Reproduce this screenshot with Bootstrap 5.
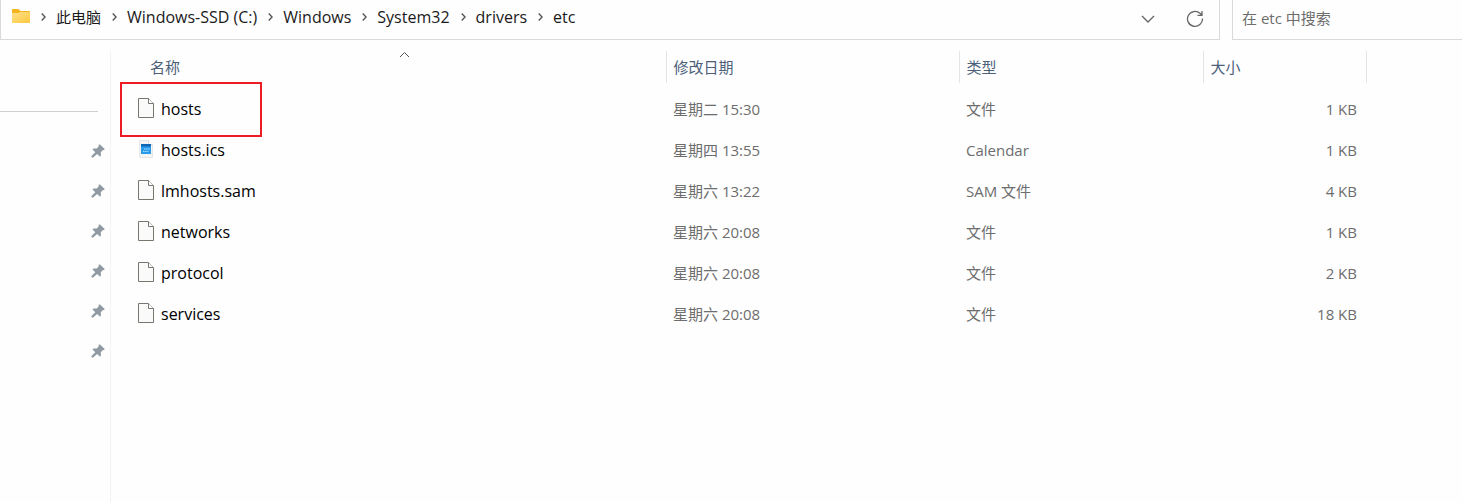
<!DOCTYPE html>
<html lang="zh-CN">
<head>
<meta charset="utf-8">
<meta name="viewport" content="width=device-width, initial-scale=1">
<title>etc</title>
<link href="https://cdn.jsdelivr.net/npm/bootstrap@5.3.0/dist/css/bootstrap.min.css" rel="stylesheet">
<style>
  body { font: 15px/20px "Open Sans", "Noto Sans CJK SC", sans-serif; background: #fefefe; color: #000; }
  .topbar { height: 40px; gap: 12px; }
  .address { border: solid #d9d9d9; border-width: 0 1px 1px; padding: 0 15px 4px 11px; }
  .crumbs { gap: 11px; padding-bottom: 2px; }
  .crumbs li { gap: 10px; }
  .crumbs a { color: #1a1a1a; font-size: 16px; }
  .crumbs a:lang(zh) { font-size: 15px; }
  .tools { gap: 29px; }
  .address button { color: #666; width: 18px; height: 18px; margin-top: 2px; }
  .search { width: 230px; border: solid #d9d9d9; border-width: 0 0 1px 1px; padding: 0 9px 4px; }
  .search input { outline: 0; color: #6d6d6d; }
  .search input::placeholder { color: #6d6d6d; opacity: 1; }
  .panes { margin-top: 11px; }
  .side { width: 111px; border-right: 1px solid #f3f3f3; }
  .side hr { margin: 60px 12px 19px 0; border-color: #cfcfcf; opacity: 1; }
  .pins li { height: 40px; padding-right: 5px; }
  .files { table-layout: fixed; }
  .files th { height: 32px; padding: 0 7px; font-weight: 400; color: #4c607a; border-right: 1px solid #e5e5e5; position: relative; }
  .files th:last-child { border: 0; }
  .files th:first-child { padding-left: 39px; }
  .files td { height: 41px; padding: 0 8px 0 7px; color: #6d6d6d; }
  .files td:first-child { padding-left: 27px; color: #000; font-size: 16px; position: relative; }
  .files .gap-row td { height: 5px; }
  .files td.size { padding-right: 9px; }
  .w-name { width: 555px; } .w-date { width: 293px; } .w-type { width: 244px; } .w-size { width: 163px; }
  .sort-mark { left: 288px; top: 0; }
  .marker { left: 9px; top: -6px; width: 142px; height: 55px; border: 2px solid #ed1c24; }
  .entry { gap: 7px; }
</style>
</head>
<body class="min-vh-100 d-flex flex-column overflow-hidden">
<svg class="d-none">
  <symbol id="page" viewBox="0 0 16 21"><path d="M.5.5h10l5 5v14H.5z" fill="#fafafa" stroke="#77776f"/><path d="M10.500.5v5h5" fill="#fff" stroke="#77776f"/></symbol>
  <symbol id="calendar" viewBox="0 0 16 21"><path d="M1.500 1.500h9l4 4v13h-13z" fill="#f5f5f5" stroke="#e6e6e6"/><path d="M10.500 1.500v4h4" fill="#fff" stroke="#dcdcdc"/><path d="M3 5h10v10H3z" fill="#2a9bea"/><path d="M3 5h10v2.500H3z" fill="#0f66b5"/><path d="M6 10h6M5 12.500h5.500" stroke="#a9dfff" stroke-dasharray="1.500 .6"/></symbol>
  <symbol id="pin" viewBox="0 0 14 14"><path d="M9 .6 13.400 4.700c.4.500 0 1.300-.6 1.300l-1.500.4-1.600 2 .2 3.300c-.1.800-.9 1-1.300.6L6.100 9.900l-3.900 3.600H.5v-1.600L4.300 8.200 2 6c-.5-.6-.2-1.400.5-1.500l3.200-.1 1.800-1.700.2-1.700c.1-.6.9-.8 1.300-.4z" fill="#909aa2"/></symbol>
  <symbol id="next" viewBox="0 0 5 8"><path d="M.7.600 4.100 4 .7 7.400" fill="none" stroke="#555" stroke-width="1.400"/></symbol>
</svg>

<header class="topbar d-flex flex-shrink-0">
  <nav class="address d-flex align-items-center flex-grow-1" aria-label="地址">
    <ol class="crumbs d-flex align-items-center list-unstyled mb-0 flex-grow-1 text-nowrap">
      <li class="d-flex align-items-center">
        <svg width="18" height="15" viewBox="0 0 18 15" aria-hidden="true"><defs><linearGradient id="fold" x2="1" y2="1"><stop stop-color="#ffe08a"/><stop offset="1" stop-color="#fcc83f"/></linearGradient></defs><path d="M0 1Q0 0 1 0h5.500L8.500 2H17q1 0 1 1V8H0z" fill="#f3b41f"/><path d="M0 4h6.500l2-1H18V13q0 1-1 1H1q-1 0-1-1z" fill="url(#fold)"/></svg>
      </li>
      <li class="d-flex align-items-center"><svg width="5" height="8"><use href="#next"/></svg><a class="text-decoration-none" href="#">此电脑</a></li>
      <li class="d-flex align-items-center"><svg width="5" height="8"><use href="#next"/></svg><a class="text-decoration-none" lang="en" href="#">Windows-SSD (C:)</a></li>
      <li class="d-flex align-items-center"><svg width="5" height="8"><use href="#next"/></svg><a class="text-decoration-none" lang="en" href="#">Windows</a></li>
      <li class="d-flex align-items-center"><svg width="5" height="8"><use href="#next"/></svg><a class="text-decoration-none" lang="en" href="#">System32</a></li>
      <li class="d-flex align-items-center"><svg width="5" height="8"><use href="#next"/></svg><a class="text-decoration-none" lang="en" href="#">drivers</a></li>
      <li class="d-flex align-items-center"><svg width="5" height="8"><use href="#next"/></svg><a class="text-decoration-none" lang="en" href="#">etc</a></li>
    </ol>
    <div class="tools d-flex">
      <button type="button" class="border-0 bg-transparent p-0 d-flex" aria-label="以前的位置"><svg width="18" height="18" fill="none" stroke="currentColor" stroke-width="1.400"><path d="m3 6 6 6 6-6"/></svg></button>
      <button type="button" class="border-0 bg-transparent p-0 d-flex" aria-label="刷新"><svg width="18" height="18" fill="none" stroke="currentColor" stroke-width="1.300"><path d="M16.500 8.500A7.500 7.500 0 1 1 14 3.300l1.500 1.500M16 1v4.300h-4.500"/></svg></button>
    </div>
  </nav>
  <form class="search d-flex align-items-center" role="search">
    <input type="text" class="border-0 bg-transparent p-0 w-100" placeholder="在 etc 中搜索" aria-label="在 etc 中搜索">
  </form>
</header>

<div class="panes d-flex flex-grow-1">
  <aside class="side flex-shrink-0">
    <hr>
    <ul class="pins list-unstyled mb-0">
      <li class="d-flex align-items-center justify-content-end"><svg width="14" height="14"><use href="#pin"/></svg></li>
      <li class="d-flex align-items-center justify-content-end"><svg width="14" height="14"><use href="#pin"/></svg></li>
      <li class="d-flex align-items-center justify-content-end"><svg width="14" height="14"><use href="#pin"/></svg></li>
      <li class="d-flex align-items-center justify-content-end"><svg width="14" height="14"><use href="#pin"/></svg></li>
      <li class="d-flex align-items-center justify-content-end"><svg width="14" height="14"><use href="#pin"/></svg></li>
      <li class="d-flex align-items-center justify-content-end"><svg width="14" height="14"><use href="#pin"/></svg></li>
    </ul>
  </aside>
  <main class="flex-grow-1">
    <table class="files w-100 align-middle">
      <colgroup><col class="w-name"><col class="w-date"><col class="w-type"><col class="w-size"><col></colgroup>
      <thead>
        <tr>
          <th scope="col">名称<svg class="sort-mark position-absolute" width="11" height="7" fill="none" stroke="#555"><path d="M1 6l4.500-4.500L10 6"/></svg></th>
          <th scope="col">修改日期</th><th scope="col">类型</th><th scope="col">大小</th><th></th>
        </tr>
      </thead>
      <tbody>
        <tr class="gap-row" aria-hidden="true"><td colspan="5"></td></tr>
        <tr><td><div class="marker position-absolute"></div><div class="entry d-flex align-items-center"><svg width="16" height="21"><use href="#page"/></svg><span>hosts</span></div></td><td>星期二 15:30</td><td>文件</td><td class="size text-end">1 KB</td><td></td></tr>
        <tr><td><div class="entry d-flex align-items-center"><svg width="16" height="21"><use href="#calendar"/></svg><span>hosts.ics</span></div></td><td>星期四 13:55</td><td>Calendar</td><td class="size text-end">1 KB</td><td></td></tr>
        <tr><td><div class="entry d-flex align-items-center"><svg width="16" height="21"><use href="#page"/></svg><span>lmhosts.sam</span></div></td><td>星期六 13:22</td><td>SAM 文件</td><td class="size text-end">4 KB</td><td></td></tr>
        <tr><td><div class="entry d-flex align-items-center"><svg width="16" height="21"><use href="#page"/></svg><span>networks</span></div></td><td>星期六 20:08</td><td>文件</td><td class="size text-end">1 KB</td><td></td></tr>
        <tr><td><div class="entry d-flex align-items-center"><svg width="16" height="21"><use href="#page"/></svg><span>protocol</span></div></td><td>星期六 20:08</td><td>文件</td><td class="size text-end">2 KB</td><td></td></tr>
        <tr><td><div class="entry d-flex align-items-center"><svg width="16" height="21"><use href="#page"/></svg><span>services</span></div></td><td>星期六 20:08</td><td>文件</td><td class="size text-end">18 KB</td><td></td></tr>
      </tbody>
    </table>
  </main>
</div>
<script src="https://cdn.jsdelivr.net/npm/bootstrap@5.3.0/dist/js/bootstrap.bundle.min.js"></script>
</body>
</html>
